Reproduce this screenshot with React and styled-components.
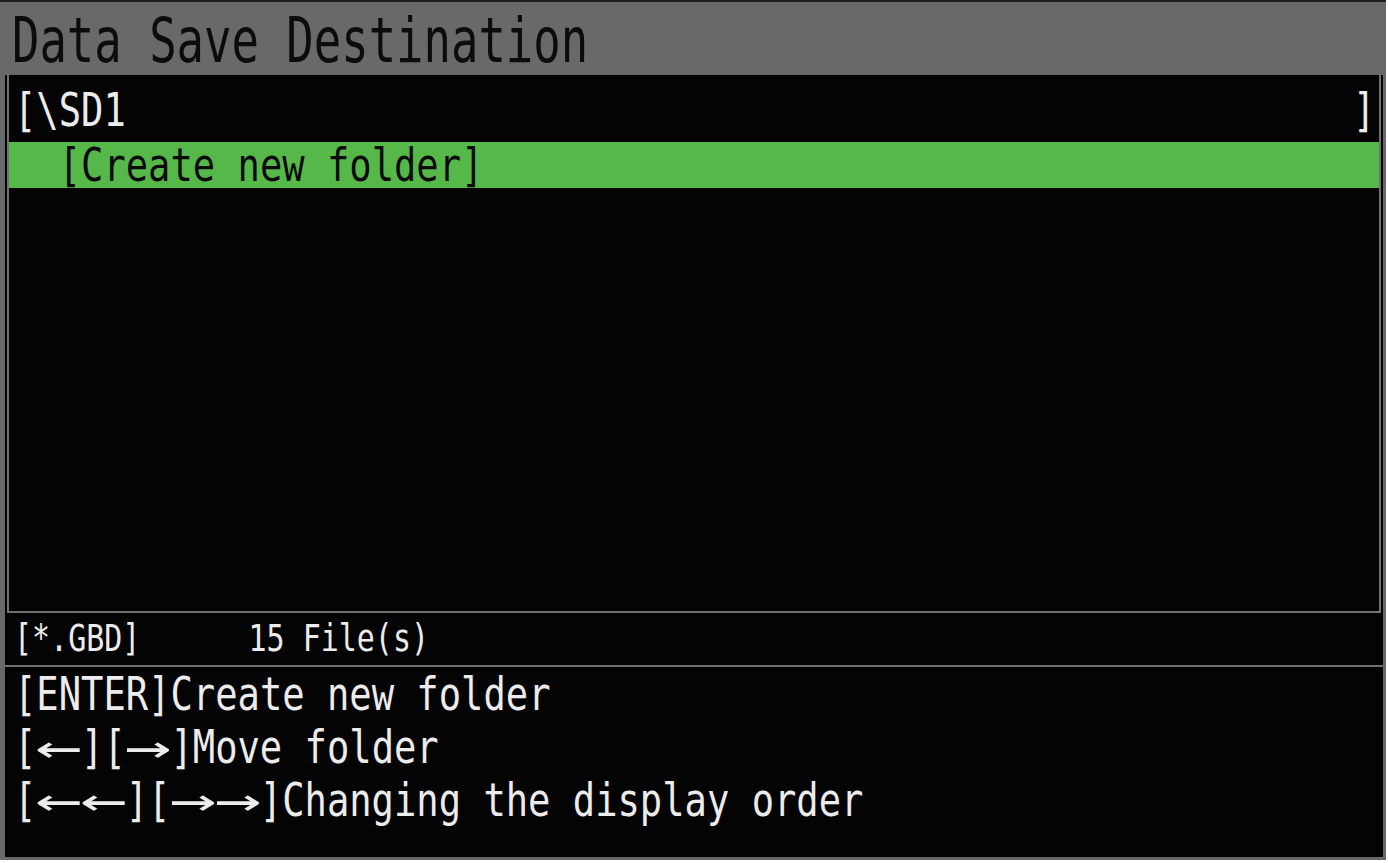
import React from "react";
import styled, { createGlobalStyle, css } from "styled-components";

const GlobalStyle = createGlobalStyle`
  html, body {
    margin: 0;
    padding: 0;
    background: #ffffff;
  }
  body {
    font-family: "DejaVu Sans Mono", "Liberation Mono", monospace;
  }
`;

// the recorder font is a narrow fixed-pitch face, so squeeze a mono font
const lcd = css`
  display: inline-block;
  font-family: "DejaVu Sans Mono", "Liberation Mono", monospace;
  white-space: pre;
  transform: scaleX(${(p) => p.$sx || 0.79});
  transform-origin: ${(p) => (p.$right ? "right" : "left")} center;
`;

const Screen = styled.div`
  width: 1386px;
  height: 860px;
  box-sizing: border-box;
  background: #67696a;
  border-top: 2px solid #1c1c1c;
  padding: 0 3px 3px 5px;
  display: flex;
  flex-direction: column;
`;

const TitleBar = styled.div`
  height: 73px;
  box-sizing: border-box;
  padding: 5px 0 0 7px;
`;

const Title = styled.span`
  ${lcd};
  font-size: 62px;
  line-height: 68px;
  color: #0c0c0c;
`;

const Panel = styled.div`
  flex: 1;
  background: #050404;
  display: flex;
  flex-direction: column;
`;

const ListBox = styled.div`
  height: 538px;
  box-sizing: border-box;
  margin: 0 2px;
  border: 2px solid #707172;
  border-top: none;
  display: flex;
  flex-direction: column;
`;

const PathRow = styled.div`
  height: 67px;
  box-sizing: border-box;
  padding: 12px 4px 0 5px;
  display: flex;
  justify-content: space-between;
  align-items: flex-start;
`;

const Txt = styled.span`
  ${lcd};
  font-size: ${(p) => p.$size || 47}px;
  line-height: ${(p) => p.$lh || 46}px;
  color: ${(p) => p.$color || "#ececec"};
`;

const EntryRow = styled.div`
  height: 46px;
  background: #57b84a;
  padding-left: 5px;
`;

const StatusRow = styled.div`
  height: 52px;
  padding-left: 9px;
  border-bottom: 2px solid #707172;
`;

const Help = styled.div`
  flex: 1;
  padding: 0 0 0 9px;
  display: flex;
  flex-direction: column;
`;

const HelpLine = styled.div`
  height: 53px;
`;

const Arrow = styled.span`
  display: inline-block;
  width: 2ch;
  text-align: center;
  transform: scaleX(2.1);
`;

const keys = {
  l: "\u2190",
  r: "\u2192",
};

export default function App() {
  return (
    <>
      <GlobalStyle />
      <Screen>
        <TitleBar>
          <Title $sx={0.735}>Data Save Destination</Title>
        </TitleBar>
        <Panel>
          <ListBox>
            <PathRow>
              <Txt>[\SD1</Txt>
              <Txt $right>]</Txt>
            </PathRow>
            <EntryRow>
              <Txt $color="#0a0a0a">{"  [Create new folder]"}</Txt>
            </EntryRow>
          </ListBox>
          <StatusRow>
            <Txt $size={37} $lh={52} $sx={0.81}>
              {"[*.GBD]      15 File(s)"}
            </Txt>
          </StatusRow>
          <Help>
            <HelpLine>
              <Txt $lh={53}>[ENTER]Create new folder</Txt>
            </HelpLine>
            <HelpLine>
              <Txt $lh={53}>
                [<Arrow>{keys.l}</Arrow>][<Arrow>{keys.r}</Arrow>]Move folder
              </Txt>
            </HelpLine>
            <HelpLine>
              <Txt $lh={53}>
                [<Arrow>{keys.l}</Arrow>
                <Arrow>{keys.l}</Arrow>][<Arrow>{keys.r}</Arrow>
                <Arrow>{keys.r}</Arrow>]Changing the display order
              </Txt>
            </HelpLine>
          </Help>
        </Panel>
      </Screen>
    </>
  );
}
